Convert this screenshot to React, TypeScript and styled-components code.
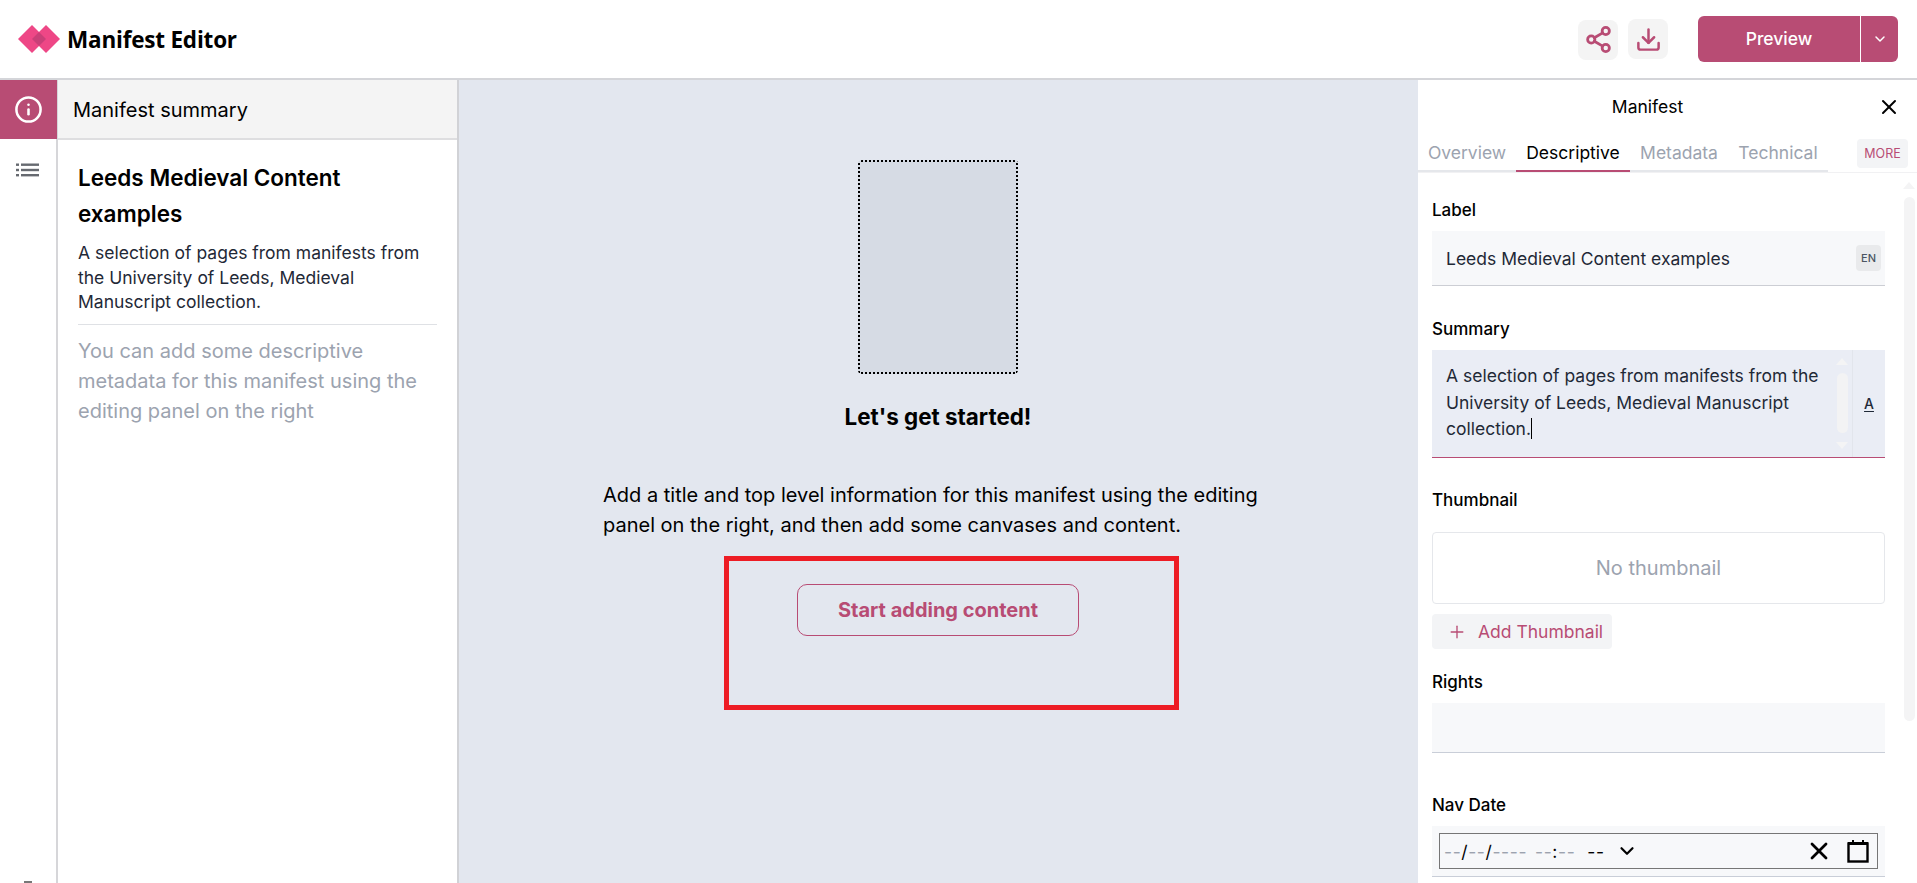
import React from "react";
import styled, { createGlobalStyle } from "styled-components";
import { ChevronDown, Download, Info, Plus, Share2, X } from "lucide-react";

const brand = "#b84c74";

const GlobalStyle = createGlobalStyle`
  * { box-sizing: border-box; }
  html, body { margin: 0; height: 100%; overflow: hidden; background: #fff; }
  body { font-family: Inter, "Liberation Sans", sans-serif; color: #000; }
`;

const Page = styled.div`
  position: relative;
  display: flex;
  flex-direction: column;
  height: 883px;
  overflow: hidden;
`;

const Header = styled.header`
  display: flex;
  align-items: center;
  flex: 0 0 80px;
  padding: 0 19px 0 18px;
  border-bottom: 2px solid #d4d5d9;
`;

const LogoWrap = styled.div`
  display: flex;
  align-items: center;
  gap: 7px;
  flex: 1;
`;

const LogoText = styled.span`
  font-family: "Open Sans", sans-serif;
  font-size: 22.5px;
  font-weight: 700;
  letter-spacing: -0.2px;
`;

const IconButton = styled.button<{ $offset?: number }>`
  display: grid;
  place-items: center;
  width: 40px;
  height: 40px;
  margin-right: 10px;
  margin-top: ${(p) => p.$offset ?? 0}px;
  padding: 0;
  border: none;
  border-radius: 8px;
  background: #f4f4f4;
  color: ${brand};
`;

const PreviewGroup = styled.div`
  display: flex;
  height: 46px;
  width: 200px;
  margin-left: 20px;
  border-radius: 6px;
  overflow: hidden;
  background: ${brand};
  color: #fff;
`;

const PreviewMain = styled.div`
  flex: 1;
  display: grid;
  place-items: center;
  padding-bottom: 1px;
  font-size: 17.5px;
  font-weight: 500;
  border-right: 1px solid #fff;
`;

const PreviewCaret = styled.div`
  flex: 0 0 37px;
  display: grid;
  place-items: center;
`;

const Body = styled.div`
  flex: 1;
  display: flex;
  min-height: 0;
`;

const Rail = styled.nav`
  flex: 0 0 58px;
  border-right: 2px solid #d6d6d9;
  display: flex;
  flex-direction: column;
`;

const RailItem = styled.div<{ $active?: boolean }>`
  display: grid;
  place-items: center;
  height: ${(p) => (p.$active ? 59 : 58)}px;
  padding-top: ${(p) => (p.$active ? 0 : 3)}px;
  margin-right: ${(p) => (p.$active ? -1 : 0)}px;
  background: ${(p) => (p.$active ? brand : "transparent")};
  color: ${(p) => (p.$active ? "#fff" : "#666a70")};
`;

const RailFooter = styled.div`
  margin-top: auto;
  align-self: center;
  width: 8px;
  height: 2px;
  background: #777;
  margin-right: 1px;
`;

const Summary = styled.aside`
  flex: 0 0 401px;
  border-right: 2px solid #d1d2d6;
  display: flex;
  flex-direction: column;
`;

const SummaryHead = styled.div`
  height: 60px;
  display: flex;
  align-items: center;
  padding: 2px 0 0 15px;
  font-size: 20px;
  background: #f4f4f4;
  border-bottom: 2px solid #dedee0;
`;

const SummaryBody = styled.div`
  padding: 20px 20px 0;
`;

const SummaryTitle = styled.h2`
  margin: 0 0 9px;
  font-size: 22.5px;
  font-weight: 600;
  line-height: 36px;
`;

const SummaryText = styled.p`
  margin: 0;
  padding-bottom: 9px;
  font-size: 17.5px;
  line-height: 24.5px;
  color: #1f2937;
  border-bottom: 1px solid #dfe1e5;
`;

const SummaryHint = styled.p`
  margin: 11px 0 0;
  font-size: 20px;
  line-height: 30px;
  color: #9ca3af;
`;

const Center = styled.main`
  flex: 1;
  display: flex;
  flex-direction: column;
  align-items: center;
  padding: 80px 1px 0 0;
  background: #e3e7ef;
`;

const Placeholder = styled.div`
  width: 160px;
  height: 214px;
  border-radius: 4px;
  background-color: #d6dbe4;
  background-image: repeating-linear-gradient(90deg, #000 0 2px, transparent 2px 4px),
    repeating-linear-gradient(90deg, #000 0 2px, transparent 2px 4px),
    repeating-linear-gradient(0deg, #000 0 2px, transparent 2px 4px),
    repeating-linear-gradient(0deg, #000 0 2px, transparent 2px 4px);
  background-size: 100% 2px, 100% 2px, 2px 100%, 2px 100%;
  background-position: 3px 0, 3px 100%, 0 3px, 100% 3px;
  background-repeat: no-repeat;
`;

const CenterTitle = styled.h3`
  margin: 29px 0 0;
  font-size: 22.4px;
  font-weight: 700;
  line-height: 28px;
`;

const CenterText = styled.p`
  width: 670px;
  margin: 49px 0 0;
  font-size: 20px;
  line-height: 30px;
`;

const StartButton = styled.button`
  width: 282px;
  height: 52px;
  margin-top: 44px;
  border: 1px solid ${brand};
  border-radius: 10px;
  background: transparent;
  color: ${brand};
  font-family: inherit;
  font-size: 20px;
  font-weight: 700;
`;

const RedBox = styled.div`
  position: absolute;
  left: 724px;
  top: 556px;
  width: 455px;
  height: 154px;
  border: 5px solid #ed1c24;
  pointer-events: none;
`;

const Panel = styled.aside`
  flex: 0 0 499px;
  display: flex;
  flex-direction: column;
  min-height: 0;
`;

const PanelHead = styled.div`
  position: relative;
  flex: 0 0 54px;
  display: flex;
  align-items: center;
  justify-content: center;
  padding: 0 40px 1px 0;
  font-size: 17.5px;
`;

const CloseIcon = styled(X)`
  position: absolute;
  right: 16px;
  top: 15px;
`;

const Tabs = styled.div`
  display: flex;
  align-items: flex-start;
  flex: 0 0 38px;
  border-bottom: 1px solid #f1f1f3;
`;

const TabRow = styled.div`
  display: flex;
  flex: 0 0 410px;
  height: 38px;
  border-bottom: 2px solid #e5e7eb;
`;

const Tab = styled.div<{ $active?: boolean; $w: number }>`
  flex: 0 0 ${(p) => p.$w}px;
  height: 38px;
  display: flex;
  justify-content: center;
  padding-top: 7px;
  font-size: 17.5px;
  line-height: 24px;
  color: ${(p) => (p.$active ? "#000" : "#9ca3af")};
  border-bottom: 2px solid ${(p) => (p.$active ? brand : "transparent")};
`;

const MoreButton = styled.div`
  margin: 5px 0 0 29px;
  width: 51px;
  height: 29px;
  display: grid;
  place-items: center;
  border-radius: 4px;
  background: #f3f4f6;
  color: ${brand};
  font-size: 12.5px;
`;

const PanelBody = styled.div`
  flex: 1;
  display: flex;
  min-height: 0;
  overflow: hidden;
`;

const Fields = styled.div`
  flex: 0 0 467px;
  padding: 25px 0 0 14px;
`;

const FieldLabel = styled.div<{ $mt?: number; $mb?: number }>`
  height: 24px;
  margin-top: ${(p) => p.$mt ?? 0}px;
  margin-bottom: ${(p) => p.$mb ?? 9}px;
  font-size: 17px;
  font-weight: 500;
  line-height: 24px;
`;

const LabelInput = styled.div`
  position: relative;
  height: 55px;
  display: flex;
  align-items: center;
  padding-left: 14px;
  background: #f7f8fa;
  border-bottom: 1px solid #ccced4;
  font-size: 17.5px;
  color: #1f2937;
`;

const LangBadge = styled.span`
  position: absolute;
  right: 4px;
  top: 14px;
  width: 25px;
  height: 26px;
  display: grid;
  place-items: center;
  background: #e9eaec;
  border-radius: 4px;
  font-size: 11px;
  font-weight: 500;
  color: #4b5563;
`;

const SummaryInput = styled.div`
  display: flex;
  height: 108px;
  margin-top: 1px;
  background: #eaedf5;
  border-bottom: 1px solid ${brand};
`;

const SummaryValue = styled.div`
  flex: 1;
  padding: 13px 14px 0;
  font-size: 17.5px;
  line-height: 26.5px;
  color: #1f2937;
`;

const Caret = styled.span`
  display: inline-block;
  width: 1px;
  height: 21px;
  margin-bottom: -4px;
  background: #000;
`;

const MiniScroll = styled.div`
  flex: 0 0 11px;
  margin-right: 4px;
  display: flex;
  flex-direction: column;
  align-items: center;
  padding-top: 8px;
  color: #f4f4f5;
`;

const MiniThumb = styled.div`
  width: 11px;
  height: 60px;
  margin: 8px 0 9px;
  border-radius: 6px;
  background: #f3f3f4;
`;

const RichToggle = styled.div`
  flex: 0 0 33px;
  display: flex;
  align-items: center;
  justify-content: center;
  border-left: 1px solid #e2e5ec;
  font-size: 14px;
  font-weight: 500;
  text-decoration: underline;
  text-underline-offset: 2px;
  color: #1f2937;
`;

const ThumbBox = styled.div`
  height: 72px;
  display: grid;
  place-items: center;
  border: 1px solid #e5e7eb;
  border-radius: 4px;
  color: #9ca3af;
  font-size: 20px;
`;

const AddButton = styled.div`
  display: flex;
  align-items: center;
  gap: 11px;
  width: 180px;
  height: 35px;
  margin-top: 10px;
  padding-left: 15px;
  border-radius: 4px;
  background: #f3f4f6;
  color: ${brand};
  font-size: 17.5px;
`;

const RightsInput = styled.div`
  height: 50px;
  background: #f7f8fa;
  border-bottom: 1px solid #c9ced8;
`;

const DateField = styled.div`
  height: 51px;
  margin-top: 1px;
  padding: 7px 7px 0;
  background: #f7f8fa;
  border-bottom: 1px solid #c9ced8;
`;

const DateInput = styled.div`
  height: 36px;
  display: flex;
  align-items: center;
  padding: 0 8px 0 4px;
  border: 1px solid #767676;
  font-size: 17.5px;
`;

const DatePart = styled.span<{ $dim?: boolean; $gap?: number }>`
  margin-left: ${(p) => p.$gap ?? 0}px;
  letter-spacing: 0.6px;
  color: ${(p) => (p.$dim ? "#9ca3af" : "#000")};
`;

const DateCaret = styled(ChevronDown)`
  margin-left: 11px;
`;

const DateIcons = styled.div`
  margin-left: auto;
  display: flex;
  align-items: center;
  gap: 14px;
`;

const ScrollTrack = styled.div`
  flex: 0 0 11px;
  margin-left: 18px;
  display: flex;
  flex-direction: column;
  align-items: center;
  padding-top: 9px;
  color: #f4f4f5;
`;

const ScrollThumb = styled.div`
  width: 11px;
  height: 524px;
  margin-top: 8px;
  border-radius: 6px;
  background: #f4f4f5;
`;

const Logo = () => (
  <svg width="42" height="28" viewBox="0 0 42 28">
    <path d="M14 0 28 14 14 28 0 14Z" fill="#ee4786" />
    <path d="M28 0 42 14 28 28 14 14Z" fill="#ee4786" />
    <path d="M21 7 28 14 21 21 14 14Z" fill="#c93f78" />
  </svg>
);

const ListIcon = () => (
  <svg width="24" height="14" viewBox="0 0 24 14" fill="currentColor">
    <rect x="0" y="0.5" width="3" height="2.4" />
    <rect x="5" y="0.5" width="18" height="2.4" />
    <rect x="0" y="5.8" width="3" height="2.4" />
    <rect x="5" y="5.8" width="18" height="2.4" />
    <rect x="0" y="11" width="3" height="2.4" />
    <rect x="5" y="11" width="18" height="2.4" />
  </svg>
);

const Arrow = ({ up }: { up?: boolean }) => (
  <svg width="12" height="7" viewBox="0 0 12 7">
    <path d={up ? "M6 0 12 7H0Z" : "M6 7 12 0H0Z"} fill="currentColor" />
  </svg>
);

const CalendarIcon = () => (
  <svg width="22" height="23" viewBox="0 0 22 23" fill="none" stroke="#000">
    <rect x="1.5" y="3.5" width="19" height="18" strokeWidth="2.4" />
    <path d="M1 3.5h20" strokeWidth="3" />
    <path d="M6 0v3M16 0v3" strokeWidth="2" />
  </svg>
);

export default function App() {
  return (
    <Page>
      <GlobalStyle />
      <Header>
        <LogoWrap>
          <Logo />
          <LogoText>Manifest Editor</LogoText>
        </LogoWrap>
        <IconButton $offset={1}>
          <Share2 size={29} strokeWidth={2.3} />
        </IconButton>
        <IconButton>
          <Download size={27} strokeWidth={2.2} />
        </IconButton>
        <PreviewGroup>
          <PreviewMain>Preview</PreviewMain>
          <PreviewCaret>
            <ChevronDown size={16} strokeWidth={2.2} />
          </PreviewCaret>
        </PreviewGroup>
      </Header>
      <Body>
        <Rail>
          <RailItem $active>
            <Info size={29} strokeWidth={2.1} />
          </RailItem>
          <RailItem>
            <ListIcon />
          </RailItem>
          <RailFooter />
        </Rail>
        <Summary>
          <SummaryHead>Manifest summary</SummaryHead>
          <SummaryBody>
            <SummaryTitle>Leeds Medieval Content examples</SummaryTitle>
            <SummaryText>
              A selection of pages from manifests from the University of Leeds, Medieval Manuscript
              collection.
            </SummaryText>
            <SummaryHint>
              You can add some descriptive metadata for this manifest using the editing panel on the
              right
            </SummaryHint>
          </SummaryBody>
        </Summary>
        <Center>
          <Placeholder />
          <CenterTitle>Let's get started!</CenterTitle>
          <CenterText>
            Add a title and top level information for this manifest using the editing panel on the
            right, and then add some canvases and content.
          </CenterText>
          <StartButton>Start adding content</StartButton>
        </Center>
        <Panel>
          <PanelHead>
            Manifest
            <CloseIcon size={24} strokeWidth={2} />
          </PanelHead>
          <Tabs>
            <TabRow>
              <Tab $w={98}>Overview</Tab>
              <Tab $w={114} $active>
                Descriptive
              </Tab>
              <Tab $w={98}>Metadata</Tab>
              <Tab $w={100}>Technical</Tab>
            </TabRow>
            <MoreButton>MORE</MoreButton>
          </Tabs>
          <PanelBody>
            <Fields>
              <FieldLabel>Label</FieldLabel>
              <LabelInput>
                Leeds Medieval Content examples
                <LangBadge>EN</LangBadge>
              </LabelInput>
              <FieldLabel $mt={31}>Summary</FieldLabel>
              <SummaryInput>
                <SummaryValue>
                  A selection of pages from manifests from the University of Leeds, Medieval
                  Manuscript collection.
                  <Caret />
                </SummaryValue>
                <MiniScroll>
                  <Arrow up />
                  <MiniThumb />
                  <Arrow />
                </MiniScroll>
                <RichToggle>A</RichToggle>
              </SummaryInput>
              <FieldLabel $mt={30} $mb={20}>
                Thumbnail
              </FieldLabel>
              <ThumbBox>No thumbnail</ThumbBox>
              <AddButton>
                <Plus size={20} strokeWidth={1.6} />
                Add Thumbnail
              </AddButton>
              <FieldLabel $mt={21}>Rights</FieldLabel>
              <RightsInput />
              <FieldLabel $mt={40}>Nav Date</FieldLabel>
              <DateField>
                <DateInput>
                  <DatePart $dim>--</DatePart>
                  <DatePart>/</DatePart>
                  <DatePart $dim>--</DatePart>
                  <DatePart>/</DatePart>
                  <DatePart $dim>----</DatePart>
                  <DatePart $dim $gap={8}>
                    --
                  </DatePart>
                  <DatePart>:</DatePart>
                  <DatePart $dim>--</DatePart>
                  <DatePart $gap={12}>--</DatePart>
                  <DateCaret size={22} strokeWidth={2.4} />
                  <DateIcons>
                    <X size={28} strokeWidth={2.4} />
                    <CalendarIcon />
                  </DateIcons>
                </DateInput>
              </DateField>
            </Fields>
            <ScrollTrack>
              <Arrow up />
              <ScrollThumb />
            </ScrollTrack>
          </PanelBody>
        </Panel>
      </Body>
      <RedBox />
    </Page>
  );
}
